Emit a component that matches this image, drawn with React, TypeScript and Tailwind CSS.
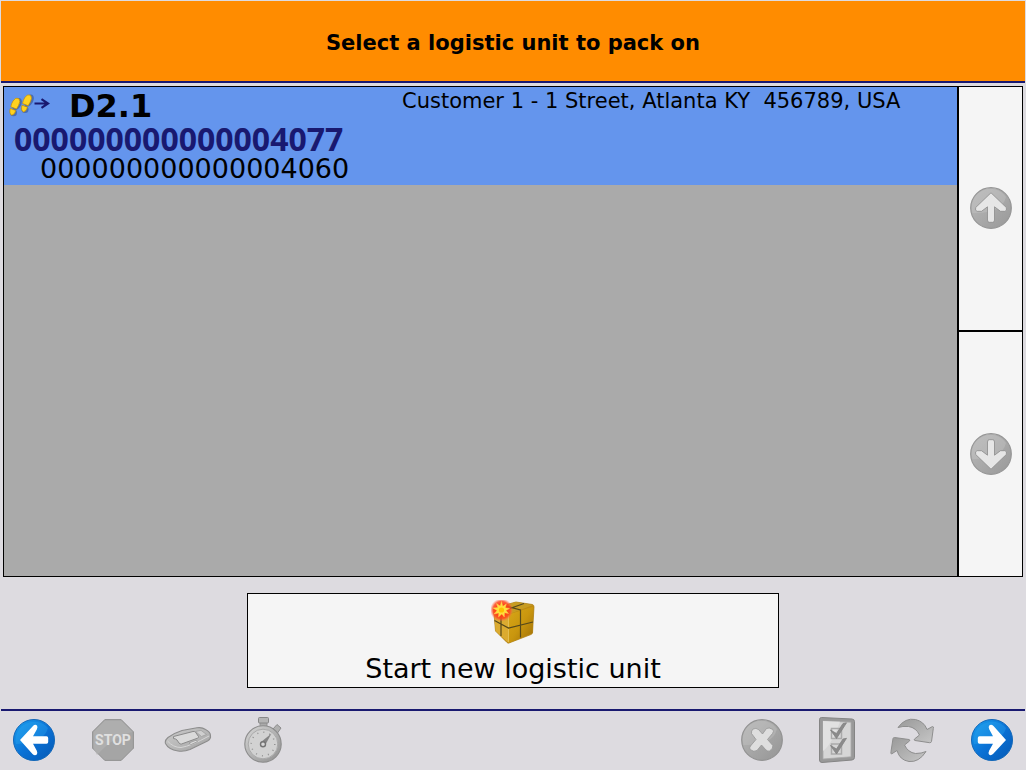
import React, { useState } from "react";

interface LogisticUnit {
  location: string;
  number: string;
  parent: string;
  customer: string;
}

const units: LogisticUnit[] = [
  {
    location: "D2.1",
    number: "000000000000004077",
    parent: "000000000000004060",
    customer: "Customer 1 - 1 Street, Atlanta KY  456789, USA",
  },
];

const ARROW_LEFT =
  "M7 21 L20 7 Q22 5 24 6.5 Q25 8 23.8 10.5 L20 17.3 H33.5 Q35.2 17.3 35.2 19 V23 Q35.2 24.7 33.5 24.7 H20 L23.8 31.8 Q25 34.4 23.600 35.800 Q21.500 37 19.500 35 Z";

const ARROW_UP =
  "M21 5.800 L36.300 20.500 Q37.300 24 34.800 24.300 H30.500 L24.500 19.800 V33 Q24.500 35.300 22.700 35.300 H19.300 Q17.500 35.300 17.500 33 V19.800 L11.500 24.300 H7.200 Q4.700 24 5.700 20.500 Z";

const BlueArrow = ({ right }: { right?: boolean }) => {
  const id = right ? "blueRight" : "blueLeft";
  return (
    <svg viewBox="0 0 42 42" className="size-[42px]" aria-hidden="true">
      <defs>
        <linearGradient id={id} x1="0" y1="0" x2="1" y2="1">
          <stop offset="0" stopColor="#1ba0ee" />
          <stop offset="0.5" stopColor="#0a72d6" />
          <stop offset="1" stopColor="#0558b4" />
        </linearGradient>
      </defs>
      <circle cx="21" cy="21" r="20.5" fill={`url(#${id})`} stroke="#1267b8" />
      <path d="M3 25 A18.5 18.5 0 0 1 35 9 Q31 24 3 25 Z" fill="#2fa9f0" opacity="0.35" />
      <path d={ARROW_LEFT} fill="#fff" transform={right ? "rotate(180 21 21)" : undefined} />
    </svg>
  );
};

const GreyArrow = ({ down }: { down?: boolean }) => {
  const id = down ? "greyDown" : "greyUp";
  return (
    <svg viewBox="0 0 42 42" className="size-[42px]" aria-hidden="true">
      <defs>
        <linearGradient id={id} x1="0" y1="0" x2="1" y2="1">
          <stop offset="0" stopColor="#bcbcbc" />
          <stop offset="0.6" stopColor="#a6a6a6" />
          <stop offset="1" stopColor="#989898" />
        </linearGradient>
      </defs>
      <circle cx="21" cy="21" r="20.3" fill={`url(#${id})`} stroke="#969696" strokeWidth="1.2" />
      <path d="M2.5 26 A18.8 18.8 0 0 1 36 10 Q32 27 2.5 26 Z" fill="#c6c6c6" opacity="0.4" />
      <path
        d={ARROW_UP}
        fill="#e6e6e6"
        stroke="#8c8c8c"
        strokeWidth="0.8"
        transform={down ? "rotate(180 21 21)" : undefined}
      />
    </svg>
  );
};

const StopIcon = () => (
  <svg viewBox="0 0 42 42" className="size-[42px]" aria-hidden="true">
    <path
      d="M12.8 0.6 H29.2 L41.4 12.8 V29.2 L29.2 41.4 H12.8 L0.6 29.2 V12.8 Z"
      fill="#a5a5a5"
      stroke="#929292"
    />
    <path d="M13 1.5 H29 L40.5 13 Q22 17 5 36 L1.5 29 V13 Z" fill="#b2b2b2" opacity="0.7" />
    <text
      x="21"
      y="26"
      textAnchor="middle"
      fill="#e0e0e0"
      className="font-['Liberation_Sans_Narrow','Roboto',sans-serif] text-[14px] font-bold"
    >
      STOP
    </text>
  </svg>
);

const ScannerIcon = () => (
  <svg viewBox="0 0 48 28" className="h-7 w-12" aria-hidden="true">
    <defs>
      <linearGradient id="scanner" x1="0" y1="0" x2="1" y2="1">
        <stop offset="0" stopColor="#cccccc" />
        <stop offset="0.6" stopColor="#b4b4b4" />
        <stop offset="1" stopColor="#9c9c9c" />
      </linearGradient>
    </defs>
    <path
      d="M1.5 17.5 Q0.5 14.5 4 11.5 Q10 7 18 4.5 L33 1.8 Q38 1 41.5 3.5 Q46.5 6 46.5 9.5 V11.5 Q46 13.5 43.5 15 L26 23.5 Q20 26 14 25 Q4.5 23.5 1.5 17.5 Z"
      fill="url(#scanner)"
      stroke="#8d8d8d"
      strokeWidth="1.1"
    />
    <path d="M3.5 15 Q9 21.5 17 21.5 Q27 20 45 10" fill="none" stroke="#d6d6d6" />
    <path
      d="M9.5 10.5 L29 5.500 Q30.500 5.200 31.500 6.200 L34.500 10.500 Q34.800 11.700 33.500 12.200 L17.500 18 Q16 18.300 15 17 L13 14 Q12 12.800 9.500 12.500 Z"
      fill="#dadada"
      stroke="#8a8a8a"
    />
    <path d="M31.500 5.500 L37 4.300 L42.500 8.500 L37.500 10.500 Z" fill="#cfcfcf" stroke="#a0a0a0" strokeWidth="0.800" />
    <path d="M25 17 L32 14.300 L33.500 15.600 L27 18.600 Z" fill="#dedede" stroke="#8f8f8f" strokeWidth="0.700" />
  </svg>
);

const StopwatchIcon = () => (
  <svg viewBox="0 0 40 48" className="h-12 w-10" aria-hidden="true">
    <defs>
      <linearGradient id="watch" x1="0" y1="0" x2="1" y2="1">
        <stop offset="0" stopColor="#d6d6d6" />
        <stop offset="1" stopColor="#8f8f8f" />
      </linearGradient>
    </defs>
    <path d="M17 6 H24 V12 H17 Z" fill="#aaa" stroke="#8d8d8d" strokeWidth="0.800" />
    <rect x="15.500" y="1.500" width="10" height="5.500" rx="1" fill="#b5b5b5" stroke="#888" />
    <path d="M30 13 L34 8.500 L38 12 L34.500 17 Z" fill="#b0b0b0" stroke="#8d8d8d" />
    <circle cx="20" cy="28" r="18.200" fill="url(#watch)" stroke="#8c8c8c" strokeWidth="1.100" />
    <circle cx="20" cy="28" r="14.800" fill="#d2d2d2" stroke="#aaa" />
    <circle cx="20" cy="28" r="11.800" fill="none" stroke="#939393" strokeWidth="1.500" strokeDasharray="1 5.180" />
    <path d="M28.500 17.500 L22.500 28.500 L18 26 Z" fill="#858585" />
    <circle cx="20" cy="28.200" r="2.500" fill="#d8d8d8" stroke="#747474" strokeWidth="1.400" />
  </svg>
);

const CancelIcon = () => (
  <svg viewBox="0 0 42 42" className="size-[42px]" aria-hidden="true">
    <defs>
      <linearGradient id="cancel" x1="0" y1="0" x2="1" y2="1">
        <stop offset="0" stopColor="#b8b8b8" />
        <stop offset="1" stopColor="#959595" />
      </linearGradient>
    </defs>
    <circle cx="21" cy="21" r="20.300" fill="url(#cancel)" stroke="#929292" strokeWidth="1.200" />
    <path d="M2.500 26 A18.800 18.800 0 0 1 36 10 Q32 27 2.500 26 Z" fill="#c2c2c2" opacity="0.400" />
    <path
      d="M12 10 Q15 8.500 17.500 10.500 L21.500 15 L25.500 9.500 Q28 8 32 10.500 Q33 12.500 31.500 14.500 L26.500 20.500 L31.800 26.500 Q32.500 29.500 28.500 32 Q26.500 32.500 25 31 L20.500 26 L16 31.500 Q13 33.500 9 30.500 Q8.300 28.500 9.500 27 L15 20.500 L10.500 14.500 Q10 12 12 10 Z"
      fill="#dedede"
      stroke="#969696"
      strokeWidth="0.800"
    />
  </svg>
);

const ChecklistIcon = () => (
  <svg viewBox="0 0 38 48" className="h-12 w-[38px]" aria-hidden="true">
    <path
      d="M3.500 1.500 L34 3 Q36.500 3.300 36.500 5.500 V41.500 Q36.500 43.500 34 44 L4 46.500 Q1.500 46.500 1.500 44 V3.800 Q1.500 1.500 3.500 1.500 Z"
      fill="#999"
      stroke="#858585"
    />
    <path d="M5 5 L33 6.200 V40.800 L5 43 Z" fill="#d6d6d6" stroke="#aaa" strokeWidth="0.800" />
    <path d="M5 5 L22 5.700 Q14 28 5 35 Z" fill="#e1e1e1" />
    <path d="M13.500 12.500 H23.500 V22.500 H13.500 Z M13.500 28 H23.500 V38 H13.500 Z" fill="none" stroke="#aaa" strokeWidth="1.500" />
    <path
      d="M12.500 14 L18.500 17.500 L25 7.500 L28.500 6.800 L18.500 22.500 Z M12.500 29.500 L18.500 33 L25 23 L28.500 22.300 L18.500 38 Z"
      fill="#8b8b8b"
      stroke="#828282"
      strokeWidth="0.800"
    />
  </svg>
);

const RefreshIcon = () => (
  <svg viewBox="0 0 44 46" className="h-[46px] w-11" aria-hidden="true">
    <defs>
      <linearGradient id="refresh" x1="0" y1="0" x2="1" y2="1">
        <stop offset="0" stopColor="#999" />
        <stop offset="1" stopColor="#c6c6c6" />
      </linearGradient>
    </defs>
    <g fill="url(#refresh)" stroke="#8e8e8e" strokeLinejoin="round">
      <path d="M8 10.500 Q15 0.500 25.500 2.500 Q34 4.500 37 12.500 L42.500 9.500 Q44 9.500 43.300 11.500 L41.500 24.500 Q41.300 25.800 39.500 25.700 L25 23.500 Q23.500 23 24.500 22 L29.500 18 Q26 10.500 18.500 9.500 Q12.500 9 8 10.500 Z" />
      <path d="M36 34.500 Q29 45.500 19 44.500 Q9.500 43 7 33.500 L1.500 37 Q0.500 36.500 1 34.500 L3 21.500 Q3.300 20.500 4.500 20.500 L19 22.500 Q20.500 23 19.500 24 L14.500 28 Q18 35.500 25.500 36.500 Q31.500 36.500 36 34.500 Z" />
    </g>
  </svg>
);

const BoxIcon = () => (
  <svg viewBox="0 0 44 44" className="size-11" aria-hidden="true">
    <defs>
      <radialGradient id="glow">
        <stop offset="0.400" stopColor="#ff3a0c" />
        <stop offset="0.750" stopColor="#ff4a1e" stopOpacity="0.850" />
        <stop offset="1" stopColor="#ff7050" stopOpacity="0" />
      </radialGradient>
      <linearGradient id="boxFront" x1="0" y1="0" x2="1" y2="1">
        <stop offset="0" stopColor="#d9a818" />
        <stop offset="0.500" stopColor="#c9960e" />
        <stop offset="1" stopColor="#9c6c06" />
      </linearGradient>
    </defs>
    <path d="M2.500 8 L25 2 L41.500 4.500 Q43 5 43 7 L41.500 33 Q41 34 40 34.500 L18 43 Q17 43.500 16 42.500 L4.500 31 Z" fill="#be8a12" stroke="#a8780d" strokeWidth="0.700" />
    <path d="M3 8.500 L25 2 L42 5 L17.500 14.500 Z" fill="#c79c22" />
    <path d="M17.500 14.500 L42.500 6.500 L41.500 33 L18 43 Z" fill="url(#boxFront)" />
    <path d="M3 9 L17.500 14.500 L17.500 43 L4.500 31 Z" fill="#dbab30" />
    <path
      d="M13 5.500 L29.500 10 V37.500 M33 3.500 L10 11.500 V36 M3.500 20.500 L17.500 28 L42 22"
      fill="none"
      stroke="#56491c"
      strokeWidth="1.200"
    />
    <path d="M17.500 15 V27 M17.500 29 V42" stroke="#e9c75d" strokeWidth="0.800" />
    <circle cx="10.500" cy="10" r="11.500" fill="url(#glow)" />
    <path
      d="M10.500 1.500 L11.800 6.300 L15.300 4 L14.300 7.800 L18.500 8.500 L15 10.500 L17.500 13.500 L13.500 12.800 L13.300 17 L10.800 14 L7.500 17 L7.800 13 L3 14 L6 10.500 L2 8 L6.800 7.600 L5.500 3.500 L9.200 6 Z"
      fill="#ffe03a"
      stroke="#ffd060"
      strokeWidth="0.400"
    />
    <circle cx="10.500" cy="10" r="2.600" fill="#ffc000" />
  </svg>
);

const FootstepsIcon = () => (
  <svg viewBox="0 0 42 24" className="h-6 w-[42px]" aria-hidden="true">
    <g fill="#2f477c" opacity="0.500">
      <ellipse cx="8" cy="10" rx="4.200" ry="6.500" transform="rotate(30 8 10)" />
      <ellipse cx="20" cy="6.500" rx="4.200" ry="6.500" transform="rotate(30 20 6.500)" />
      <ellipse cx="4.500" cy="18.800" rx="3.500" ry="3.500" />
      <ellipse cx="16" cy="15.500" rx="3.500" ry="3.500" />
    </g>
    <g fill="#ffd21f" stroke="#c18c05" strokeWidth="0.700">
      <path d="M4 7 Q6.500 2.800 9.800 4.500 Q12 7 9.500 11.500 L7.500 15 L1.800 12.800 Q2.300 9.800 4 7 Z" />
      <path d="M1.300 14.500 L6.800 16.500 Q5.800 20.500 2.800 21.200 Q-0.200 20 1.300 14.500 Z" />
      <path d="M15.700 3.700 Q18.200 -0.500 21.500 1.200 Q23.700 3.700 21.200 8.200 L19.200 11.700 L13.500 9.500 Q14 6.500 15.700 3.700 Z" />
      <path d="M13 11.200 L18.500 13.200 Q17.500 17.200 14.500 17.900 Q11.500 16.700 13 11.200 Z" />
    </g>
    <path d="M25.500 9.500 H38 M32.500 5.200 L39 9.500 L32.500 13.800" fill="none" stroke="#191970" strokeWidth="2.200" />
  </svg>
);

const toolButton = "flex h-[59px] w-[75px] items-center justify-center pb-0.5";
const navButton = "flex h-[59px] w-[66px] items-center justify-center pb-0.5";

const App = () => {
  const [selected, setSelected] = useState<number>(0);

  return (
    <div className="flex min-h-screen flex-col bg-[#dddbe0] px-px pt-px font-['DejaVu_Sans',Verdana,sans-serif] text-black">
      <header className="border-b-2 border-[#191970] bg-[#ff8c00] px-4 pt-[26px] pb-[22px]">
        <h1 className="text-center text-[21px] leading-8 font-bold">Select a logistic unit to pack on</h1>
      </header>

      <main className="flex flex-1 flex-col">
        <section className="mx-0.5 mt-[3px] flex flex-1 border border-black">
          <ul className="flex-1 bg-[#aaaaaa]">
            {units.map((unit, i) => (
              <li key={unit.number}>
                <button
                  onClick={() => setSelected(i)}
                  className={`flex w-full items-start text-left ${
                    selected === i ? "bg-[#6495ed]" : "bg-[#f5f5f5]"
                  }`}
                >
                  <span className="block w-[398px] shrink-0">
                    <span className="flex items-center gap-[18px] pl-[5px]">
                      <FootstepsIcon />
                      <span className="text-[32px] leading-[38px] font-bold">{unit.location}</span>
                    </span>
                    <span className="block pl-2.5 font-['Open_Sans','Noto_Sans',sans-serif] text-[32px] leading-7 font-bold text-[#191970]">
                      {unit.number}
                    </span>
                    <span className="block pl-9 text-[27px] leading-8">{unit.parent}</span>
                  </span>
                  <span className="text-[21px] leading-7 whitespace-pre-wrap">{unit.customer}</span>
                </button>
              </li>
            ))}
          </ul>
          <div className="grid w-[65px] grid-rows-2 border-l-2 border-black bg-[#f5f5f5]">
            <button disabled aria-label="Scroll up" className="flex items-center justify-center border-b-2 border-black">
              <GreyArrow />
            </button>
            <button disabled aria-label="Scroll down" className="flex items-center justify-center">
              <GreyArrow down />
            </button>
          </div>
        </section>

        <div className="flex justify-center pt-4 pb-[21px]">
          <button className="flex h-[95px] w-[532px] flex-col items-center border border-black bg-[#f5f5f5] pt-1.5">
            <BoxIcon />
            <span className="pt-2 text-[27px] leading-[34px]">Start new logistic unit</span>
          </button>
        </div>
      </main>

      <footer className="flex justify-between border-t-2 border-[#191970]">
        <div className="flex gap-2">
          <button aria-label="Back" className={navButton}>
            <BlueArrow />
          </button>
          <div className="flex">
            <button disabled aria-label="Stop" className={toolButton}>
              <StopIcon />
            </button>
            <button disabled aria-label="Scanner" className={toolButton}>
              <ScannerIcon />
            </button>
            <button disabled aria-label="Timer" className={toolButton}>
              <StopwatchIcon />
            </button>
          </div>
        </div>
        <div className="flex gap-2.5">
          <div className="flex">
            <button disabled aria-label="Cancel" className={toolButton}>
              <CancelIcon />
            </button>
            <button disabled aria-label="Checklist" className={toolButton}>
              <ChecklistIcon />
            </button>
            <button disabled aria-label="Refresh" className={toolButton}>
              <RefreshIcon />
            </button>
          </div>
          <button aria-label="Next" className={navButton}>
            <BlueArrow right />
          </button>
        </div>
      </footer>
    </div>
  );
};

export default App;
